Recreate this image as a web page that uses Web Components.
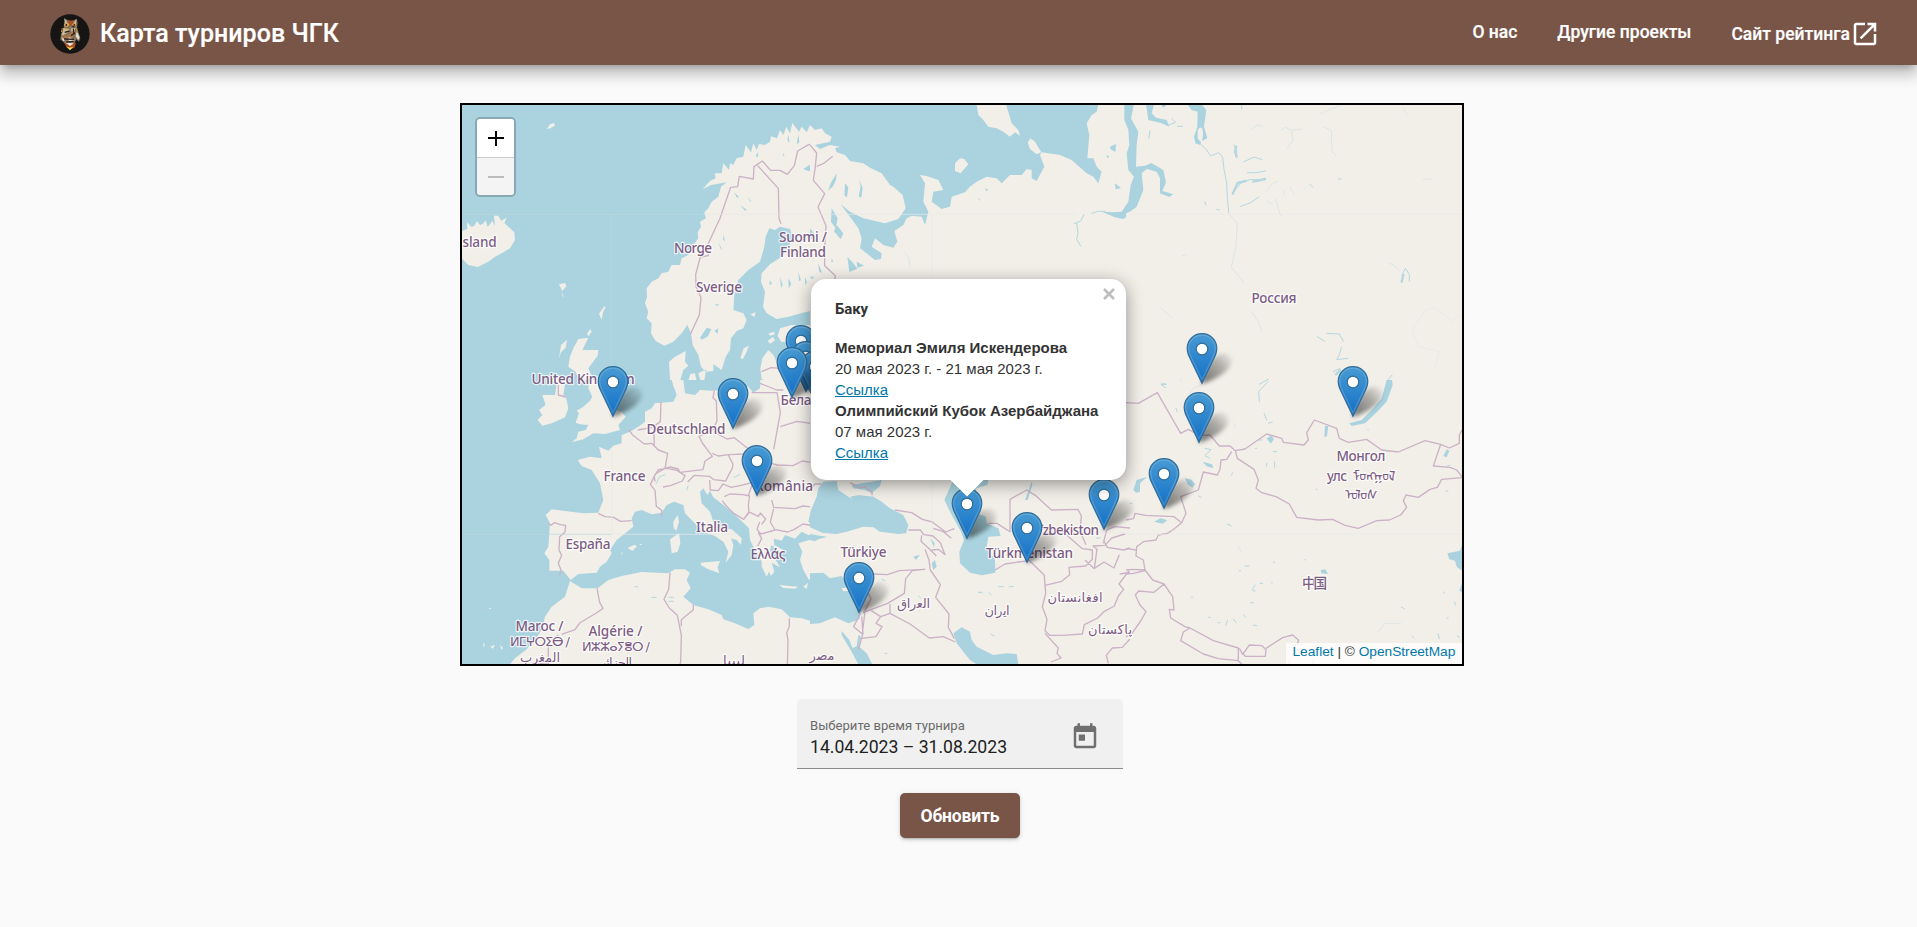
<!DOCTYPE html>
<html lang="ru">
<head>
<meta charset="utf-8">
<title>Карта турниров ЧГК</title>
<style>
html,body{margin:0;height:100%}
body{background:#fafafa;font-family:Roboto,sans-serif;overflow:hidden}
</style>
</head>
<body>
<tournament-app></tournament-app>
<script>
const define = (name, html, setup) => {
  customElements.define(name, class extends HTMLElement {
    constructor() {
      super();
      this.attachShadow({mode: 'open'}).innerHTML = html;
      if (setup) setup(this, this.shadowRoot);
    }
  });
};

define('owl-logo', `
<style>:host{display:block;width:40px;height:40px}svg{display:block}</style>
<svg width="40" height="40" viewBox="0 0 120 120">
<circle cx="60" cy="60" r="59" fill="#161514"/>
<path d="M43 13l14 7h12l11-6 3 13-2 13 5 16 5 17-4 10-8-7-5 10-16 6-14-3-7-9-6-2 2-18 8-17z" fill="#85705c"/>
<path d="M43 13l9 11-5 8zM80 14l-9 12 6 7z" fill="#c9bbaa"/>
<path d="M54 18l8 3 9-3-3 12-6 6-6-6z" fill="#b24f1c"/>
<path d="M42 30l12-4 4 8-6 4-9-1zM67 30l9-3 3 7-7 5-5-3z" fill="#d9b05a"/>
<circle cx="49" cy="33" r="3" fill="#4d2012"/><circle cx="73" cy="33" r="3" fill="#4d2012"/>
<path d="M40 42l17 3 3 7-20 12-5 1zM62 44l14-4-2 14-8 4z" fill="#cdbb98"/>
<path d="M36 64l14 2 18-16 6 8-12 19-24-6z" fill="#a8784a"/>
<path d="M80 52l9 18-4 8-8-11zM34 70l13 7-8 5zM56 69l18 10-18 4z" fill="#e4dccd"/>
<path d="M66 36l8 4M44 55l15-4M63 65l12-8M42 75l30 1M49 84l22-2M70 44l2 14" stroke="#2b2320" stroke-width="4"/>
<path d="M37 42l-3 12M45 43l10 2M78 42l4 14" stroke="#c6912b" stroke-width="3"/>
<path d="M44 88l16 4 18-6-5 16-13 3-11-5z" fill="#a94f27"/>
<path d="M48 87l24 1-12 8z" fill="#f2ebdd"/><path d="M50 98l10 3 10-3-10 11z" fill="#ffe34a"/>
</svg>`);

define('nav-link', `
<style>:host{display:block}a{display:flex;align-items:center;height:38px;color:#fff;font:500 17.5px/24px Roboto,sans-serif;white-space:nowrap;text-decoration:none;-webkit-text-stroke:.2px #fff}</style>
<a><slot></slot></a>`);

define('app-header', `
<style>
:host{display:flex;align-items:center;box-sizing:border-box;height:65px;padding:0 37px 0 50px;background:#795548;color:#fff;position:relative;z-index:2;
box-shadow:0 6px 6px -4px rgba(0,0,0,.2),0 10px 12.5px 1px rgba(0,0,0,.14),0 4px 17.5px 2.5px rgba(0,0,0,.12)}
h1{margin:3px 0 0 10px;font:500 25px/40px Roboto,sans-serif;letter-spacing:.04px;white-space:nowrap;-webkit-text-stroke:.2px #fff}
owl-logo{margin-top:3px}
nav{margin-left:auto;display:flex;gap:40px}
.ext{margin-top:2px}
svg{display:block;width:30px;height:30px;fill:#fff}
</style>
<owl-logo></owl-logo><h1>Карта турниров ЧГК</h1>
<nav><nav-link>О нас</nav-link><nav-link>Другие проекты</nav-link>
<nav-link class="ext">Сайт рейтинга<svg viewBox="0 0 24 24"><path d="M19 19H5V5h7V3H5c-1.11 0-2 .9-2 2v14c0 1.1.89 2 2 2h14c1.1 0 2-.9 2-2v-7h-2v7zM14 3v2h3.59l-9.83 9.83 1.41 1.41L19 6.41V10h2V3h-7z"/></svg></nav-link></nav>`);

define('map-terrain', `
<style>
:host{display:block}
svg{display:block}
.l{fill:#f2efe9}.w{fill:#aad3df}
.b{fill:none;stroke:#cbb2c6;stroke-width:4;stroke-linejoin:round}
.r{fill:none;stroke:#b4d7e0;stroke-width:3;stroke-linejoin:round;stroke-linecap:round}
.f{fill:none;stroke:#dce5e5;stroke-width:3}
.g{fill:none;stroke:#b9d9e0;stroke-width:2}
.h{fill:none;stroke:#e9eae7;stroke-width:2}
text{font-family:"Noto Sans","DejaVu Sans","Noto Sans CJK SC",sans-serif;font-size:13.6px;font-weight:500;fill:#7c5c83;stroke:#fff;stroke-width:2.5px;stroke-opacity:.75;paint-order:stroke;stroke-linejoin:round;text-anchor:middle}
.a{font-family:"DejaVu Sans",sans-serif;font-size:13px}
</style>
<svg width="1000" height="559" viewBox="462 105 1000 559">
<rect class="l" x="460" y="100" width="1010" height="570"/>
<svg x="455" y="95" width="360" height="285" viewBox="0 0 1080 855">
<rect class="w" width="1080" height="855"/>
<path class="l" d="M20 408L37 402 36 382 50 396 58 392 66 378 75 390 84 386 92 376 98 396 112 378 120 392 117 362 130 362 138 377 155 368 148 384 165 400 178 412 180 435 165 460 140 475 120 485 100 500 68 516 40 510 20 490ZM275 102l10-14 12-4 3 8-14 8zM312 568l18-4 4 10-12 14zM320 590l6 16-4-2zM432 656l16-22 4 2-8 16-4 22zM396 716l10-14 4 8-10 14zM312 790l6-40 18-16-4 24-14 14z"/>
<path class="l" d="M1080 98L1064 92 1055 112 1040 95 1032 110 1012 84 1005 115 994 95 985 120 975 105 966 130 948 124 945 140 930 150 912 147 905 165 895 145 888 172 872 150 865 185 845 190 835 210 825 205 822 225 805 205 800 235 779 235 782 250 765 258 743 283 768 270 815 262 798 275 790 305 770 320 760 340 748 352 753 370 735 380 738 395 728 412 730 430 715 450 700 480 680 490 675 510 650 510 640 530 620 535 610 550 590 560 575 580 576 605 570 625 580 650 575 670 590 685 588 715 602 738 628 752 655 740 680 715 697 690 708 715 713 750 730 780 738 815 752 830 775 828 775 808 800 825 812 785 825 765 828 730 845 708 865 700 875 675 865 655 835 645 838 600 850 555 880 525 915 500 928 455 932 425 943 400 960 405 975 395 1005 402 1014 430 1000 455 980 485 945 508 920 535 918 560 930 590 924 635 935 655 965 672 1000 665 1050 652 1080 645ZM1080 690L1010 690 975 700 968 722 978 740 1000 742 1005 770 995 810 970 812 955 780 940 765 922 790 916 820 920 855 1080 855ZM938 738l16-12 6 10-14 10zM940 716l16-6 4 8-14 4zM856 790l10-30 16-8-6 16-12 24zM886 658l16-6-4 14zM645 855L642 800 660 785 692 768 690 800 700 812 685 825 676 855ZM700 855l6-18 14-2 4 20zM730 835l24-12-6 32h-12zM372 855L362 830 340 815 345 785 355 760 370 732 400 728 382 765 430 765 428 782 400 820 415 855ZM290 855l20-14 14 14z"/>
<path class="w" d="M735 728l20-30 14 4-10 22-18 10zM778 708l12-8-2 16zM1045 222l18-12 17-5v16l-18 8zM836 290l16 16-6 2zM855 330l20 14-4 4zM806 420l4 20-6-8zM790 440l12 26-6-6zM875 305l16 16-6-2zM780 628h12l-6 6zM975 545l8 24-5 10zM1000 550l9 16-8 14zM1030 530l8 26-6 2zM1050 545l6 16-6 10zM1064 520l8 14-4 4zM945 555l6 12-8 2zM985 175l4 6-6 2zM1000 120l4 24-7-8zM1030 118l3 24-8 6zM910 170l-2 18-6-6z"/>
<path class="b" d="M1080 158L1062 148 1028 168 1018 212 997 238 975 226 947 226 922 198 897 215 895 252 853 244 848 275 827 277 795 370 758 450 760 482 736 486 722 538 723 575 738 608 733 660 706 718M908 212L970 280 972 370 978 386M1080 215l-4 30 4 15M920 830l28-12 30 2h40M918 855l40 10"/>
<path class="g" d="M20 358H735M470 358V855"/><path class="h" d="M745 358H1080"/>
</svg>
<svg x="455" y="380" width="360" height="290" viewBox="0 0 1080 870">
<rect class="w" width="1080" height="870"/>
<path class="l" d="M650 0H685L690 40 720 45 735 30 770 32 800 30 850 10 880 20 895 38 915 25 916 0H1080V392L1066 398 1060 425 1080 440V466L1060 465 1040 455 1020 476 990 465 980 482 956 476 958 495 985 510 975 515 950 495 945 510 965 545 975 562 950 548 958 575 948 588 942 575 935 590 920 560 920 545 910 525 895 500 885 480 882 445 862 425 835 400 805 375 775 352 765 332 757 345 745 325 735 335 740 370 765 395 775 425 800 445 830 448 860 475 858 495 845 480 828 475 835 495 830 525 812 548 820 515 805 485 780 468 745 455 715 425 690 400 685 375 658 365 635 375 620 398 590 403 560 390 540 395 530 415 535 440 485 480 465 510 470 520 455 545 435 560 425 578 370 582 347 600 325 572 283 572 283 540 268 520 280 500 285 430 272 405 290 388 330 393 385 400 430 398 445 360 435 310 410 270 380 258 368 240 405 230 440 235 432 200 460 212 475 197 500 190 500 165 525 155 550 140 570 125 570 95 590 85 600 70 655 65 665 45Z"/>
<path class="l" d="M372 0L405 0 400 25 412 50 405 62 385 80 365 92 372 100 362 128 375 133 400 135 392 150 370 155 365 175 350 187 385 178 415 160 450 162 495 150 490 135 512 110 500 95 482 90 465 70 445 30 435 0ZM290 0L305 10 300 45 262 45 272 75 252 90 262 105 248 120 262 137 290 130 330 112 340 85 333 52 325 45 332 0ZM655 425L668 405 672 425 664 452 656 445ZM645 478L672 460 676 490 668 515 650 520ZM518 504l20-10 8 5-14 14zM552 492h10l-4 4zM498 520l6-4-4 8zM737 548L795 543 788 562 793 580 760 568 738 556ZM972 615L1005 618 1030 620 1020 626 985 624ZM1030 490L1080 475V590L1062 600 1045 570 1035 540 1042 515ZM1045 620l14-12-4 18zM655 10L680 5 675 25 655 22Z"/>
<path class="l" d="M345 603L380 625 428 625 460 600 500 588 560 576 640 580 660 568 690 568 705 578 695 600 707 625 685 650 715 675 760 688 800 705 805 718 840 730 880 747 898 735 895 700 915 685 940 680 980 688 1005 712 1040 715 1080 727V870H150L180 835 215 808 250 765 262 745 270 710 290 680 330 650ZM84 785l6 12-4 4zM105 800l14-6-4 12zM134 794l10 10-4 6zM100 683l10 2-4 3z"/>
<path class="r" d="M604 310l10-20 16-6M695 330l4-12M838 292l16-8M590 652h14M642 652h14M642 664h14M540 620h8"/>
<path class="b" d="M310 15v30l22 6M618 65l-2 60-20 14 2 62M548 150l44-8M522 150l10 14 36 28 22-2 20 20 28 10-8 45-28 16-16 32 14 18 4 48 16 12v20M600 305l-2-16 12-20 26-4 30 6 24 16-8 16-36 14-22 4M626 265l20-4 24 6 4 10 70-8 6-26 22-14-30-40-10-20 42-20 12-26-2-60-10-10 4-22M776 155l40 22 22-4 50 40 20 24 40-12M888 210l-16 12-52 2-30 4-18-8M820 225l14 28-2 12-12 22-8 16-36-4-12-10-46-3-20 20M764 300l2 30 24 2 14-20 24 10 30-6 40-10M808 350l16-8 40 2 20 4-4 26 2 24-16 20-30-18-24-24-10-14M898 235l30 10 40 10 46 2 28-14 24 4 14 10M940 258l-50 60-10 30M880 395l30 14 6-10 16 18-12 16M950 360l6 22 64 4 24-8 36 4M956 386l-10 40 14 24-42 12-12-14 8-22M958 448l40 8 20-8 26-16 36 6M908 498l12-22-10-18M880 398l-14 20M890 38h76l10 60-20 110M976 140l50-16 54 8M915 10l50 20h20M280 430l8 6 10-8 18 6 16 2-2 20-16 14-2 40 8 16-10 24 8 20-4 16M430 400l20 10 26 2 20 12 34-2M426 625l8 42 10 18-20 14-50 30-14 20-40 14M310 765l-30 25v60h-50M645 578l-4 50-14 30 16 26 24 22 12 60-2 80-8 24M715 675v14l-36 30v20M1003 715v24l-8 20 4 20-2 80"/>
<path class="g" d="M20 463H470"/><path class="h" d="M470 210V463H850"/>
</svg>
<svg x="810" y="95" width="325" height="375" viewBox="0 0 975 1125">
<rect class="l" width="975" height="1125"/>
<path class="w" d="M0 28L500 28 505 60 520 75 535 95 560 100 580 110 600 125 615 112 630 122 625 105 605 85 588 28 865 28 860 50 845 60 830 85 838 120 832 190 850 190 860 215 875 230 865 265 850 245 830 235 785 195 750 180 695 172 690 180 703 215 680 258 665 250 665 225 650 222 635 240 600 240 575 265 560 250 530 245 500 260 480 275 465 292 425 305 420 335 395 342 365 320 370 290 400 285 385 255 350 243 330 240 345 265 340 320 355 350 345 390 335 365 305 362 290 370 280 390 253 408 262 440 250 458 220 450 195 430 185 455 215 475 213 492 195 495 170 475 150 460 155 430 145 400 120 365 92 328 120 350 160 370 225 385 265 372 287 340 278 300 250 275 240 270 215 235 180 218 160 205 120 198 105 180 80 172 75 160 90 155 60 150 30 162 15 150 60 140 65 125 45 115 35 100 15 105 0 90ZM943 28H975V60L970 90 985 130 975 190 980 350 960 358 940 372 915 367 875 350 910 352 935 350 955 320 962 270 972 245 955 225 950 175 958 150 955 105 943 75Z"/>
<path class="w" d="M80 235l-16 26-10 26 14-12 10-20zM105 265l10 12-4 30-8-6zM146 252l12 26-4 30-8-4 6-30zM65 340l18 30-6 30-14-20zM80 390l20 25-8 18-20-24zM112 485l18 20 12 16-24 10zM140 500l22 12-20 6zM900 155l18-8-2 24-14-8zM915 265l18 14-16 4zM65 490l5 10-6 2zM890 180l8 4-6 6zM525 280l10 4-6 5zM505 312l5-2-2 8zM0 400l12 15-6 20-6-10zM0 545h14l-8 8zM25 505l12 30-10-6z"/>
<path class="l" d="M435 205L450 190 463 192 475 208 452 235 435 228ZM653 142L662 130 675 140 694 172 680 178 660 162ZM535 70l14 26-8-5z"/>
<path class="b" d="M0 150l20 24-4 40-6 42 34 40-20 40 24 56-4 70v50l32 30-2 14M20 214l20-8 28-22"/>
<path class="r" d="M845 355l20-6 20 0M822 358l-10 20-20 8M800 385l4 30-4 18 12 20"/>
<path class="f" d="M283 472l14 16 2 24"/><path class="h" d="M0 358H800M365 358V600"/>
</svg>
<svg x="1126" y="95" width="339" height="290" viewBox="-12 0 1017 870">
<rect class="l" x="-12" width="1017" height="870"/>
<path class="w" d="M-17 28H12L3 70 25 110 20 150 18 215 45 212 65 204 100 225 108 262 97 288 130 298 118 306 90 295 90 250 80 230 50 222 35 235 40 285 20 335 0 350-20 358-25 350-5 320 2 270 12 245-5 225-10 175-2 150-5 105-17 75ZM48 28H72L65 55 78 68 110 75 118 95 95 85 55 75ZM92 28h20l-12 10zM172 28H215L229 45 222 95 232 130 215 138 210 150 196 145 192 125 202 95 203 50 185 45Z"/>
<path class="l" d="M203 105q16-20 16 15l-4 25-12-15z"/>
<path class="r" d="M210 145l20 20 12 18 24-10 12 14 4 36 8 40 2 45 4 44M312 150l8 18v18M342 200l30-14 24 8M352 233h25l30-5M310 292l24-30 26-8 45 0M332 334l28-10 26-18M125 70l12 12-20 8M143 94h14M224 320l4 10M260 343l8 2M540 268l8 8M625 252h8M562 725l22 14M590 715l38 2 12 22M634 758l-6 22-8 14 34-4M610 830l20-10M770 860l16-20M388 868l28-16M816 540l10-20 12 18v20M60 108l-4 22M335 32v10"/>
<path class="r" style="stroke-width:7" d="M318 155l-3 15 5 15M308 296l15-32 24-6M370 260l35-8M618 838l12-12M815 560l5-20M96 868h10"/>
<path class="f" d="M292 350l30 35-4 70-14 62 40 48M363 650l20 26 14 34M363 104l20-14 14 4M568 58l24-12 40-14M452 105l14-8 18 9 34-4M485 108l4 28-18 24M580 95l24 12 2 62 14 14M408 290l20-24 16-8M410 318l18 10M436 310l16 54M460 284l4 16M480 276l12 20M155 483l16-4M878 252h30M820 40l12 20M776 503l18 10 14 14M94 640l34 30M155 850l-5 8"/>
<path class="h" style="stroke-width:3" d="M846 705l40-60 28-7 54 40 28-20M846 705l20 50 62 14-12 50"/>
<path class="h" d="M0 358H996"/>
</svg>
<svg x="810" y="470" width="320" height="200" viewBox="0 0 960 600">
<rect class="l" width="960" height="600"/>
<path class="w" d="M0 130L5 115 20 80 25 55 40 35 80 33 85 60 130 90 120 80 145 75 190 80 215 95 240 115 280 135 295 165 288 190 265 192 210 185 190 172 160 170 110 185 80 192 40 190 0 172ZM125 45L215 30 210 48 185 70 165 60 130 55ZM0 192L30 197 52 200 25 208 15 214 0 210ZM430 30H535L532 45 500 55 495 80 500 130 528 140 530 160 565 175 572 198 535 200 530 230 555 270 556 308 515 316 480 308 450 280 448 245 462 210 453 185 425 135 403 90ZM0 310L40 308 60 325 95 318 120 350 155 420 148 448 115 460 75 442 30 460 0 462ZM95 483L118 510 128 535 140 528 145 495 152 498 148 530 170 550 187 583H145L125 545 95 495ZM430 490L455 472 480 485 485 510 500 530 550 555 590 550 620 552 625 583H500L480 570 460 545 440 520ZM375 270l5 20-10 10-5-20zM360 205l14 14-2 12zM310 260l20-6-12 16zM645 90l20-55 2 10-14 45z"/>
<path class="l" d="M95 355L120 350 118 362 100 364Z"/>
<path class="r" d="M215 327l10 6M505 367h12M544 375l-8-8M566 350h14M598 350h12M326 378l6 6M542 492l10 6M860 205l10-2M225 550h6"/>
<path class="b" d="M0 60l14-18 20 0M120 38l30 16 14-4 22 16v10M255 120l50 8 32 20 30 8 40 30 26-10M295 180h36l10 14 28 4 22 20 14 36-20-16-20 2M335 196l-2 18 26 24 20 20M370 175l30 10 24 20M345 238l12 32 4 30 30 44-14 38 40 50-2 40 18 34M188 312l44 2 36-12 78-4M345 298l-38 4-20 24-4 44-50 30-74 28M155 330l28 56-18 36-8 70-26-22 20-40M240 402v28l-28 10-28-18M240 430l60 32 58 42 42-4 36 16M155 440l4 50-14 50M212 440l-14 20 18 10-18 30-48 6M535 160l26 0 40 26M600 186V88l50-28 26 16 48 44 80-2 10 20-4 46 18 40M555 300l30-18 40-6 34-4 44 44 2 30 50-12 24-20-2-22 50-4 20-20v-28l-30-4-60-52M703 320l4 50-10 40 14 38-6 34 14 14 38 0 60-4 6-28 40-20 20-20 30-16 12-30 16-20-14-16 30-40M825 270l28 26 8-58-12-10 36-2 20-22 40-12M880 210l12 22 50 8 18-6M852 296l30-20 30 18 16-40M929 312l31-5M880 220l10-40 24-10 46 4M705 490l40 44-4 16 12 14-30 12M895 580l-6-24 18-22 30-2 23-25"/>
<path class="h" d="M365 30V190M730 190H960M0 190H60"/>
</svg>
<svg x="1126" y="380" width="339" height="290" viewBox="-12 0 1017 870">
<path class="w" d="M770 0H786L788 15 770 65 742 95 705 130 665 138 658 130 695 120 730 85 755 55ZM585 138l10 0-4 30-8 4zM10 330L20 300 52 290 30 310 30 335 18 338ZM72 425l20-10 20 6-14 10zM165 295l20 4 10 14-8 10-14-10zM218 245l28 8 4 12-20-6zM996 495L990 512 952 520 958 538 975 542 980 560 996 572ZM940 228l10-20 8 4-8 20zM410 175l14-8 8 10-10 14zM572 570l14-2 8 14-20-2zM996 610l-8 22 8 4z"/>
<path class="r" d="M95 15l12 8M138 85l4 10M190 45h15M225 205l18 4-18 18 14 8M388 65l-2-30 28-30M402 100l8 20M415 130l12-4M376 205h4M386 180h10M430 215l10 0M410 250v8M434 246v18M308 278l-4 8M206 348l8 4M292 432l12 6M558 328h3M525 540v-2M345 558h12M328 572h4M430 546l4 2M375 615l-8 16 8 2M390 610h8M424 608h3M362 668h8M310 717l8 10M340 704l8 8M292 722l-4 14M236 712h5M264 728h6M186 650v4M370 735l10 2M815 682l8 4M846 768l6 6M924 762l4 14M942 636v4M973 665l4 10M950 714h5M982 768l6 4M714 148v2M905 188h10M948 333h6M952 258l8-2M0 370h6"/>
<path class="f" d="M170 55l20-30 25-10M312 130l4 10M325 500l10 18M745 755l20-25 48 0"/>
<path class="b" d="M-12 68L25 70 82 38 152 160 175 148 208 166 240 165 268 198 300 198 316 212 345 207 410 162 455 175 460 187 522 195 535 180 530 158 553 120 620 145 628 175 655 187 710 178 755 210 805 216 885 182 932 193 958 204 988 190V165L996 150M932 193L910 258 960 262 980 270 996 290M316 212L322 235 372 268 385 300 378 325 395 338 438 350 478 372 500 412 565 420 608 418 645 436 685 445 740 422 778 420 812 405 830 382 820 362 828 345 865 352 900 328 922 322 935 298 996 293M305 215L290 238 273 240 270 268 262 285 220 276 205 330 152 350 168 400 155 428 128 450 112 460 85 465 78 480 40 485 20 500 18 528 40 540 45 570 68 600 102 612 128 650 132 690 118 688 122 714 165 740 180 744 250 782 325 804 325 842 265 836 220 822 152 782 160 756 180 744M152 426l-20-16-85-4-32-6-4 16-23 4M18 510L-12 505M45 570l-40-2-17 2M45 572l-35 8-22 2M102 612l-30 25-46-4-10 12 14 30 18 20-16 28-28 40-26 12M328 805l10 18 20-28 38 2 12 12-2 20-60 0-8-10M408 805l50-32 30-8 18 16-6 14M325 842l28 28M478 840l-2 28M550 840v30"/>
<path class="h" d="M-12 463H996"/>
</svg>
<g transform="translate(0 -1)">
<text x="479.6" y="248" textLength="34">sland</text>
<text x="693" y="253.500" textLength="38">Norge</text><text x="719" y="292.500" textLength="46">Sverige</text>
<text x="803" y="242.500" textLength="48">Suomi /</text><text x="803" y="257.500" textLength="46">Finland</text>
<text x="583" y="385" textLength="103">United Kingdom</text><text x="686" y="435" textLength="79">Deutschland</text>
<text x="624.5" y="482" textLength="42">France</text><text x="784" y="491.500" textLength="58">România</text>
<text x="712" y="533" textLength="32">Italia</text><text x="588" y="550" textLength="45">España</text><text x="768" y="560" textLength="35">Ελλάς</text>
<text x="810" y="406" textLength="59">Беларусь</text>
<text x="539.500" y="632" textLength="48">Maroc /</text><text class="a" x="540" y="647" textLength="60">ⵍⵎⵖⵔⵉⴱ /</text><text class="a" x="540" y="662.500" textLength="40">المغرب</text>
<text x="615.500" y="636.500" textLength="54">Algérie /</text><text class="a" x="616" y="652" textLength="68">ⵍⵣⵣⴰⵢⴻⵔ /</text><text class="a" x="616" y="667.500" textLength="32">الجزائر</text>
<text class="a" x="734" y="666" textLength="22">ليبيا</text><text class="a" x="822" y="661" textLength="25">مصر</text>
<text x="863.500" y="557.500" textLength="46">Türkiye</text><text x="1029.500" y="558.500" textLength="87">Türkmenistan</text><text x="1065" y="536" textLength="68">Oʻzbekiston</text>
<text class="a" x="913.500" y="609" textLength="33">العراق</text><text class="a" x="997" y="616" textLength="25">ايران</text><text class="a" x="1075" y="603" textLength="55">افغانستان</text><text class="a" x="1110" y="634.500" textLength="44">پاکستان</text>
<text x="1274" y="304" textLength="45">Россия</text><text x="1361" y="461.500" textLength="49">Монгол</text><text x="1337" y="481.500" textLength="20">улс</text>
<text x="1374" y="481.500" textLength="42">ᠮᠣᠩᠭᠣᠯ</text><text x="1361" y="501" textLength="33">ᠤᠯᠤᠰ</text>
<text x="1314.500" y="588.500" textLength="25" style="font-family:'Noto Sans CJK SC',sans-serif">中国</text>
</g>
</svg>`);

define('map-marker', `
<style>:host{position:absolute;width:31px;height:51px;transform:translate(-50%,-100%)}svg{display:block;overflow:visible}</style>
<svg width="31" height="51" viewBox="0 0 31 51">
<defs><linearGradient id="g" x1="0" y1="0" x2="0" y2="1"><stop stop-color="#489bd3"/><stop offset="1" stop-color="#126fc6"/></linearGradient>
<linearGradient id="s" x1="0" y1="1" x2="1" y2="0"><stop stop-opacity=".55"/><stop offset=".6" stop-opacity=".28"/><stop offset="1" stop-opacity="0"/></linearGradient>
<filter id="f" x="-30%" y="-30%" width="160%" height="160%"><feGaussianBlur stdDeviation="2.200"/></filter></defs>
<path d="M15 51C18 38 22 25 34 21c10-2 14 5 9 13-5 7-16 13-28 17z" fill="url(#s)" filter="url(#f)"/>
<path d="M15.500.7C7.300.7.700 7.300.700 15.300c0 4 1.300 7.300 3.300 11L15.500 50.300 27 26.300c2-3.700 3.300-7 3.300-11C30.300 7.300 23.700.700 15.500.700z" fill="url(#g)" stroke="#2e6c97" stroke-width="1.200"/>
<path d="M15.500 2.200C8 2.200 2.200 8.200 2.200 15.300c0 3.600 1.200 6.800 3.100 10.300L15.500 46.800l10.200-21.200c1.900-3.500 3.100-6.700 3.100-10.300C28.800 8.200 23 2.200 15.500 2.200z" fill="none" stroke="#fff" stroke-opacity=".16" stroke-width="1.300"/>
<circle cx="15.500" cy="16" r="5.800" fill="#fff" stroke="#2e6c97" stroke-width="1.200"/>
</svg>`, host => {
  const move = () => { host.style.left = host.dataset.x + 'px'; host.style.top = host.dataset.y + 'px'; };
  queueMicrotask(move);
});

define('zoom-control', `
<style>
:host{position:absolute;left:13px;top:12px;border:2px solid rgba(0,0,0,.2);background-clip:padding-box;border-radius:5px;width:37px;overflow:hidden}
b{display:flex;align-items:center;justify-content:center;height:38px;background:#fff;border-bottom:1px solid #ccc}
b+b{background:#f4f4f4;border:0;height:37px}
i{display:block;width:16px;height:2px;background:#000;position:relative}
i.p:after{content:"";position:absolute;left:7px;top:-6.500px;width:2.500px;height:15px;background:#000}
b+b i{background:#bbb}
</style><b><i class="p"></i></b><b><i></i></b>`);

define('map-popup', `
<style>
:host{position:absolute;left:349px;top:174px;width:315px;height:218px}
.box{box-sizing:border-box;width:314.500px;height:201px;padding:20px 24px;background:#fff;border-radius:15px;box-shadow:0 4px 17px rgba(0,0,0,.4);color:#333;font:15px/21px "Liberation Sans",Arial,sans-serif;white-space:nowrap}
.tip{position:absolute;left:139px;top:200.500px;width:34px;height:17px;background:#fff;clip-path:polygon(0 0,100% 0,50% 100%)}
.x{position:absolute;left:291.500px;top:8.500px;width:12px;height:12px}
h2{margin:0 0 16.500px;font:700 15px/21px Roboto,sans-serif;letter-spacing:-.1px}
</style>
<div class="box"><h2>Баку</h2><slot></slot></div><div class="tip"></div>
<svg class="x" viewBox="0 0 12 12"><path d="M1 1l10 10M11 1L1 11" stroke="#bebebe" stroke-width="2.600"/></svg>`);

define('popup-event', `
<style>:host{display:block;line-height:21px}b,span{display:block;height:21px}a{display:block;width:max-content;height:21px;color:#0078a8;text-decoration:underline}</style>
<b><slot name="title"></slot></b><span><slot name="date"></slot></span><a>Ссылка</a>`);

define('tournament-map', `
<style>
:host{display:block;position:relative;box-sizing:border-box;width:1004px;height:563px;border:2px solid #000;overflow:hidden;background:#f2efe9}
.attr{position:absolute;right:0;bottom:0;box-sizing:border-box;width:176px;height:21px;padding-left:6.500px;background:rgba(255,255,255,.8);font:13.700px/18px "Liberation Sans",Arial,sans-serif;color:#333;white-space:nowrap}
.attr a{color:#0078a8}
</style>
<map-terrain></map-terrain>
<div id="m"></div>
<map-popup>
<popup-event><span slot="title">Мемориал Эмиля Искендерова</span><span slot="date">20 мая 2023 г. - 21 мая 2023 г.</span></popup-event>
<popup-event><span slot="title">Олимпийский Кубок Азербайджана</span><span slot="date">07 мая 2023 г.</span></popup-event>
</map-popup>
<zoom-control></zoom-control>
<div class="attr"><a>Leaflet</a> | © <a>OpenStreetMap</a></div>`, (host, root) => {
  const pts = [[800.5,375.5],[806,392],[815,402],[792,397.5],[1201.5,383.5],[613,417],[1353,416.5],[733,429],[1199,442.5],[756.5,496],[1164,508.5],[1104,530],[966.5,538.5],[1026.5,562.5],[859,612.5]];
  for (const [x, y] of pts) {
    const m = document.createElement('map-marker');
    m.dataset.x = x - 462; m.dataset.y = y - 105;
    root.getElementById('m').append(m);
  }
});

define('date-range-field', `
<style>
:host{display:flex;box-sizing:border-box;justify-content:space-between;width:326px;height:70px;padding:18px 23px 0 13px;border-radius:5px 5px 0 0;background:#f0f0f0;border-bottom:1px solid #8a8a8a}
label{display:block;font:400 13.100px/17px Roboto,sans-serif;color:#6b6b6b;white-space:nowrap}
div div{margin-top:1px;font:400 17.600px/24px Roboto,sans-serif;color:#212121;white-space:nowrap}
svg{width:30px;height:30px;margin-top:5.500px;fill:#6f6f6f}
</style>
<div><label>Выберите время турнира</label><div>14.04.2023 – 31.08.2023</div></div>
<svg viewBox="0 0 24 24"><path d="M19 3h-1V1h-2v2H8V1H6v2H5c-1.110 0-1.990.900-1.990 2L3 19c0 1.100.890 2 2 2h14c1.100 0 2-.900 2-2V5c0-1.100-.900-2-2-2zm0 16H5V8h14v11zM7 10h5v5H7z"/></svg>`);

define('primary-button', `
<style>
:host{display:block}
button{display:block;width:120px;height:45px;padding:0;border:0;border-radius:5px;background:#795548;color:#fff;font:700 17.500px/46px Roboto,sans-serif;letter-spacing:-.150px;box-shadow:0 3px 1px -2px rgba(0,0,0,.12),0 2px 3px rgba(0,0,0,.12),0 1px 6px rgba(0,0,0,.1)}
</style><button><slot></slot></button>`);

define('tournament-app', `
<style>
:host{display:block}
main{display:flex;flex-direction:column;align-items:center;padding-top:38px}
tournament-map{margin-left:7px}
date-range-field{margin-top:33px;margin-left:3px}
primary-button{margin-top:24px;margin-left:3px}
date-range-field{margin-top:32.500px}
</style>
<app-header></app-header>
<main><tournament-map></tournament-map><date-range-field></date-range-field><primary-button>Обновить</primary-button></main>`);
</script>
</body>
</html>
